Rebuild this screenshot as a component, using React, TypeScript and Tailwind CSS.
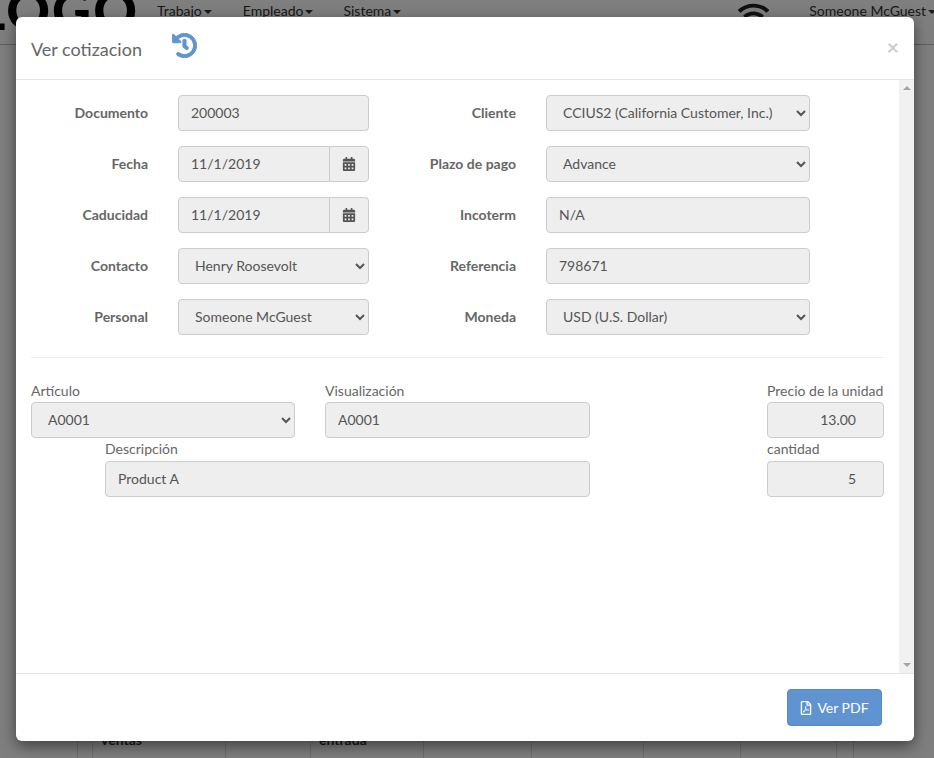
import { FaCalendarAlt, FaHistory, FaRegFilePdf, FaWifi } from "react-icons/fa";

const fieldClass =
  "h-9 w-full rounded border border-[#ccc] bg-[#eee] px-3 pb-[2px] text-[14px] text-[#555] opacity-100";

const Input = ({ value, right }: { value: string; right?: boolean }) => (
  <input disabled readOnly value={value} className={`${fieldClass} ${right ? "pr-[27px] text-right" : ""}`} />
);

const Select = ({ value }: { value: string }) => (
  <select disabled value={value} onChange={() => {}} className={`${fieldClass} appearance-auto`}>
    <option>{value}</option>
  </select>
);

const DateInput = ({ value }: { value: string }) => (
  <div className="flex h-9 w-full">
    <input
      disabled
      readOnly
      value={value}
      className="h-9 min-w-0 flex-1 rounded-l border border-[#ccc] bg-[#eee] px-3 pb-[2px] text-[14px] text-[#555] opacity-100"
    />
    <span className="-ml-px flex h-9 w-10 items-center justify-center rounded-r border border-[#ccc] bg-[#eee] text-[#555]">
      <FaCalendarAlt className="text-[14px]" />
    </span>
  </div>
);

const Label = ({ children }: { children: string }) => (
  <label className="pb-[2px] text-right text-[14px] font-bold text-[#666]">{children}</label>
);

const FieldLabel = ({ children, tight }: { children: string; tight?: boolean }) => (
  <label className={`block h-[23px] text-[14px] text-[#666] ${tight ? "leading-[21px]" : "leading-[23px]"}`}>
    {children}
  </label>
);

const NavItem = ({ children, className }: { children: string; className?: string }) => (
  <span className={`flex items-center whitespace-nowrap text-[14px] leading-[22px] text-[#333] ${className ?? ""}`}>
    {children}
    <span className="ml-[2px] mt-[2px] border-x-[4px] border-t-[4px] border-x-transparent border-t-[#333]" />
  </span>
);

const tableColumns = [15, 133, 85, 113, 108, 112, 97, 96, 17];

export default function App() {
  return (
    <div className="relative flex h-[758px] w-[934px] flex-col justify-between overflow-hidden bg-white font-['Lato','Noto_Sans',sans-serif]">
      {/* Page behind the dialog */}
      <nav className="flex h-[45px] items-start border-b border-[#bbb]">
        <span className="-mt-[17px] flex w-[157px] shrink-0 justify-end pr-[18px] text-[54px] font-black leading-[54px] tracking-[2px] text-black">
          <span className="whitespace-nowrap">LOGO</span>
        </span>
        <NavItem className="mr-[31px]">Trabajo</NavItem>
        <NavItem className="mr-[30px]">Empleado</NavItem>
        <NavItem className="mr-[337px]">Sistema</NavItem>
        <FaWifi className="-mt-[1px] mr-[40px] shrink-0 text-[31px] text-[#222]" />
        <NavItem>Someone McGuest</NavItem>
      </nav>
      <div className="ml-[77px] flex h-[40px] border-l border-[#ddd]">
        {tableColumns.map((width, i) => (
          <div
            key={i}
            style={{ width }}
            className="border-r border-[#ddd] pl-2 pt-[7px] text-[14px] font-bold leading-[30px] text-[#333]"
          >
            {i === 1 ? "ventas" : i === 3 ? "entrada" : ""}
          </div>
        ))}
      </div>

      <div className="absolute inset-0 bg-black/50" />

      {/* Dialog */}
      <div className="absolute left-4 top-[17px] flex h-[724px] w-[898px] flex-col rounded-md bg-white shadow-[0_5px_15px_rgba(0,0,0,0.5)]">
        <header className="flex h-[63px] shrink-0 items-center border-b border-[#e5e5e5] px-[15px]">
          <h4 className="pt-[2px] text-[18px] text-[#666]">Ver cotizacion</h4>
          <FaHistory strokeWidth={20} className="-mt-[6px] ml-[30px] text-[25px] text-[#5f94d0]" />
          <span className="ml-auto -mt-[3px] text-[21px] font-bold leading-none text-[#ccc]">×</span>
        </header>

        <div className="flex h-[593px] shrink-0">
          <div className="min-w-0 flex-1 px-[15px] pt-[15px]">
            <div className="grid grid-cols-[117px_191px_117px_264px] items-center gap-x-[30px] gap-y-[15px]">
              <Label>Documento</Label>
              <Input value="200003" />
              <Label>Cliente</Label>
              <Select value="CCIUS2 (California Customer, Inc.)" />

              <Label>Fecha</Label>
              <DateInput value="11/1/2019" />
              <Label>Plazo de pago</Label>
              <Select value="Advance" />

              <Label>Caducidad</Label>
              <DateInput value="11/1/2019" />
              <Label>Incoterm</Label>
              <Input value="N/A" />

              <Label>Contacto</Label>
              <Select value="Henry Roosevolt" />
              <Label>Referencia</Label>
              <Input value="798671" />

              <Label>Personal</Label>
              <Select value="Someone McGuest" />
              <Label>Moneda</Label>
              <Select value="USD (U.S. Dollar)" />
            </div>

            <hr className="mb-[21px] mt-[22px] border-[#eee]" />

            <div className="flex justify-between">
              <div className="grid w-[559px] grid-cols-[264px_265px] gap-x-[30px]">
                <div>
                  <FieldLabel>Artículo</FieldLabel>
                  <Select value="A0001" />
                </div>
                <div>
                  <FieldLabel>Visualización</FieldLabel>
                  <Input value="A0001" />
                </div>
                <div className="col-span-2 ml-[74px]">
                  <FieldLabel tight>Descripción</FieldLabel>
                  <Input value="Product A" />
                </div>
              </div>
              <div className="w-[117px]">
                <FieldLabel>Precio de la unidad</FieldLabel>
                <Input value="13.00" right />
                <FieldLabel tight>cantidad</FieldLabel>
                <Input value="5" right />
              </div>
            </div>
          </div>

          {/* Scrollbar with nothing to scroll */}
          <div className="flex w-[15px] shrink-0 flex-col items-center justify-between bg-[#f1f1f1] py-[6px]">
            <span className="border-x-[4px] border-b-[4px] border-x-transparent border-b-[#a3a3a3]" />
            <span className="border-x-[4px] border-t-[4px] border-x-transparent border-t-[#a3a3a3]" />
          </div>
        </div>

        <footer className="flex flex-1 items-start justify-end border-t border-[#e5e5e5] pr-8 pt-[15px]">
          <button className="flex h-[37px] w-[95px] items-center justify-center gap-[4px] rounded border border-[#5a8ac2] bg-[#5f94d0] pr-px text-[14px] text-white">
            <FaRegFilePdf className="text-[14px]" />
            Ver PDF
          </button>
        </footer>
      </div>
    </div>
  );
}
